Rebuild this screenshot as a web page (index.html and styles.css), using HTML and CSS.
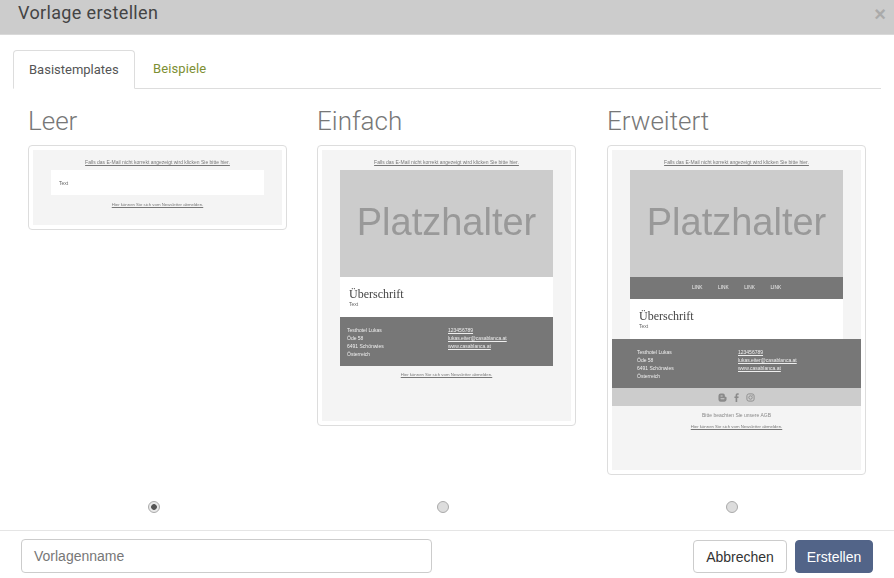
FILE: index.html
```
<!DOCTYPE html>
<html lang="de">
<head>
<meta charset="utf-8">
<title>Vorlage erstellen</title>
<link rel="stylesheet" href="styles.css">
</head>
<body>
<div class="modal">
  <header class="modal-head">
    <h1 class="modal-title">Vorlage erstellen</h1>
    <span class="close">×</span>
  </header>
  <main class="modal-body">
    <nav class="tabs">
      <a class="tab active">Basistemplates</a>
      <a class="tab link">Beispiele</a>
    </nav>
    <section class="cols">
      <div class="col">
        <h2 class="col-title">Leer</h2>
        <div class="card">
          <div class="mail mail-leer">
            <p class="mini-link first">Falls das E-Mail nicht korrekt angezeigt wird klicken Sie bitte hier.</p>
            <div class="white white-leer"><span class="mini-text">Text</span></div>
            <p class="mini-link after-leer">Hier können Sie sich vom Newsletter abmelden.</p>
          </div>
        </div>
      </div>
      <div class="col">
        <h2 class="col-title">Einfach</h2>
        <div class="card">
          <div class="mail mail-einfach">
            <p class="mini-link first">Falls das E-Mail nicht korrekt angezeigt wird klicken Sie bitte hier.</p>
            <div class="hero">Platzhalter</div>
            <div class="white white-main">
              <h3 class="mini-head">Überschrift</h3>
              <span class="mini-text">Text</span>
            </div>
            <div class="dark dark-inset">
              <div class="addr"><span>Testhotel Lukas</span><span>Öde 58</span><span>6491 Schönwies</span><span>Österreich</span></div>
              <div class="addr u"><span>123456789</span><span>lukas.eiter@casablanca.at</span><span>www.casablanca.at</span></div>
            </div>
            <p class="mini-link after-dark">Hier können Sie sich vom Newsletter abmelden.</p>
          </div>
        </div>
      </div>
      <div class="col col-last">
        <h2 class="col-title">Erweitert</h2>
        <div class="card">
          <div class="mail mail-erw">
            <p class="mini-link first">Falls das E-Mail nicht korrekt angezeigt wird klicken Sie bitte hier.</p>
            <div class="hero">Platzhalter</div>
            <div class="mini-nav"><span>LINK</span><span>LINK</span><span>LINK</span><span>LINK</span></div>
            <div class="white white-main">
              <h3 class="mini-head">Überschrift</h3>
              <span class="mini-text">Text</span>
            </div>
            <div class="dark dark-full">
              <div class="addr"><span>Testhotel Lukas</span><span>Öde 58</span><span>6491 Schönwies</span><span>Österreich</span></div>
              <div class="addr u"><span>123456789</span><span>lukas.eiter@casablanca.at</span><span>www.casablanca.at</span></div>
            </div>
            <div class="social">
              <svg class="ico" viewBox="0 0 10 10"><path fill="#8a8a8a" fill-rule="evenodd" d="M3 .5h2.6A2.2 2.2 0 0 1 7.6 2.7v.9c0 .4.3.6.7.6.6 0 1.2.3 1.2 1V7.3A2.4 2.4 0 0 1 7.1 9.7H3A2.6 2.6 0 0 1 .5 7.2V3A2.6 2.6 0 0 1 3 .5zM3.2 2.8c-.7 0-.7 1 0 1h1.600c.7 0 .7-1 0-1zM3.200 5.900c-.7 0-.7 1 0 1h3.600c.7 0 .7-1 0-1z"/></svg>
              <svg class="ico" viewBox="0 0 10 10"><path fill="#8a8a8a" d="M4 10V5.500H2.700V3.800H4V2.700C4 1.200 4.900.4 6.200.4c.6 0 1.100 0 1.300.1v1.500h-.9c-.7 0-.8.300-.8.8v1h1.600l-.2 1.700H5.800V10z"/></svg>
              <svg class="ico" viewBox="0 0 10 10"><rect x="1" y="1" width="8" height="8" rx="2.200" fill="none" stroke="#8a8a8a" stroke-width="1"/><circle cx="5" cy="5" r="1.900" fill="none" stroke="#8a8a8a" stroke-width="1"/><circle cx="7.300" cy="2.700" r=".5" fill="#8a8a8a"/></svg>
            </div>
            <p class="agb">Bitte beachten Sie unsere AGB</p>
            <p class="mini-link after-agb">Hier können Sie sich vom Newsletter abmelden.</p>
          </div>
        </div>
      </div>
    </section>
    <div class="radios">
      <span class="radio checked"></span>
      <span class="radio"></span>
      <span class="radio"></span>
    </div>
  </main>
  <footer class="modal-foot">
    <div class="field">Vorlagenname</div>
    <div class="btns">
      <button class="btn btn-default">Abbrechen</button>
      <button class="btn btn-primary">Erstellen</button>
    </div>
  </footer>
</div>
</body>
</html>
```
FILE: styles.css
```
* { box-sizing: border-box; }
html, body { margin: 0; padding: 0; }
body { width: 894px; height: 578px; overflow: hidden; background: #fff; font-family: "Liberation Sans", Arial, sans-serif; color: #333; }
.modal { display: flex; flex-direction: column; height: 578px; }
.modal-head { height: 35px; background: #ccc; border-bottom: 1px solid #d9d9d9; display: flex; justify-content: space-between; align-items: center; padding: 0 8px 8px 18px; }
.modal-title { margin: 0; font: 400 18px/24px Roboto, sans-serif; letter-spacing: .35px; color: #444; }
.close { font: 700 20px/20px "Liberation Sans", sans-serif; color: #aaa; margin-top: 2px; }
.modal-body { flex: 1; padding: 15px 13px 0; }
.tabs { display: flex; height: 39px; border-bottom: 1px solid #ddd; width: 868px; }
.tab { font: 400 13px/38px Roboto, sans-serif; padding: 0 16px; height: 39px; }
.tab.active { color: #555; background: #fff; border: 1px solid #ddd; border-bottom-color: #fff; border-radius: 4px 4px 0 0; padding: 0 15px; width: 122px; }
.tab.link { color: #7d8f33; padding: 0 18px; letter-spacing: .1px; }
.cols { display: flex; align-items: flex-start; gap: 30px; padding: 16px 0 0 15px; height: 411px; }
.col { width: 259px; flex: none; }
.col-last { margin-left: 1px; }
.col-title { margin: 0 0 7px; font: 300 26px/32px Roboto, sans-serif; color: #777; height: 33px; }
.card { border: 1px solid #ddd; border-radius: 4px; padding: 4px; background: #fff; }
.mail { background: #f4f4f4; width: 249px; display: flex; flex-direction: column; align-items: stretch; filter: blur(.25px); }
.mail-leer { height: 75px; }
.mail-einfach { height: 271px; }
.mail-erw { height: 320px; }
.mini-link { margin: 0; text-align: center; font-size: 4.3px; line-height: 6px; color: #777; text-decoration: underline; }
.first { font-size: 5px; padding-top: 9px; height: 20px; }
.white { background: #fff; margin: 0 18px; }
.white-leer { height: 25px; padding: 10px 8px 0; line-height: 8px; }
.mini-text { display: block; font-size: 5px; line-height: 6px; color: #666; }
.after-leer { margin-top: 7px; }
.hero { margin: 0 18px; height: 107px; background: #ccc; color: #999; font-size: 38px; line-height: 105px; text-align: center; }
.white-main { height: 40px; padding: 10px 9px 0; }
.mini-head { margin: 0; font: 400 12px/14px "Liberation Serif", serif; color: #444; }
.dark { background: #777; display: flex; height: 49px; color: #eee; }
.dark-inset { margin: 0 18px; padding: 9px 0 0 7px; }
.dark-full { padding: 9px 0 0 25px; }
.addr { width: 101px; display: flex; flex-direction: column; font-size: 5px; line-height: 8px; }
.addr.u { text-decoration: underline; }
.after-dark { margin-top: 6px; }
.mini-nav { margin: 0 18px; height: 22px; background: #777; color: #eee; font-size: 4.8px; line-height: 22px; display: flex; justify-content: center; gap: 15.5px; }
.social { height: 18px; background: #ccc; display: flex; justify-content: center; align-items: center; gap: 5px; }
.ico { width: 9px; height: 9px; }
.agb { margin: 0; padding-top: 5px; height: 18px; text-align: center; font-size: 5px; line-height: 8px; color: #888; }
.after-agb { margin-top: 0; }
.radios { display: flex; padding-left: 135px; gap: 277px; margin-top: 1px; }
.radio { width: 12px; height: 12px; border-radius: 50%; border: 1px solid #aaa; background: #ddd; flex: none; }
.radio.checked { background: radial-gradient(circle, #555 0 2.5px, #e8e8e8 3.2px); }
.modal-foot { height: 48px; border-top: 1px solid #e5e5e5; display: flex; justify-content: space-between; padding: 8px 21px 0; }
.field { width: 411px; height: 34px; border: 1px solid #ccc; border-radius: 4px; padding: 0 12px; font-size: 14px; line-height: 32px; color: #777; }
.btns { display: flex; gap: 8px; height: 33px; margin-top: 1px; }
.btn { height: 33px; border-radius: 4px; font: 14px/20px "Liberation Sans", sans-serif; padding: 0; }
.btn-default { width: 94px; background: #fff; border: 1px solid #ccc; color: #333; }
.btn-primary { width: 78px; background: #526488; border: 1px solid #526488; color: #fff; }
```
